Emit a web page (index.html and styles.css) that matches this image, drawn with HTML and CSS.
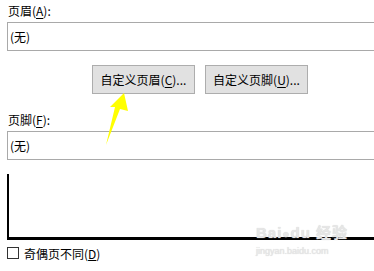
FILE: index.html
```html
<!DOCTYPE html>
<html lang="zh-CN">
<head>
  <meta charset="UTF-8" />
  <title>页面设置</title>
  <link rel="stylesheet" href="styles.css">
</head>
<body>
  <div class="dialog">
    <div class="label">页眉(<u>A</u>):</div>
    <div class="field">(无)</div>

    <div class="btn-row">
      <button class="btn">自定义页眉(<u>C</u>)...</button>
      <button class="btn">自定义页脚(<u>U</u>)...</button>
    </div>

    <div class="label label-footer">页脚(<u>F</u>):</div>
    <div class="field">(无)</div>

    <div class="preview"></div>

    <label class="check-row">
      <span class="check"></span>
      <span>奇偶页不同(<u>D</u>)</span>
    </label>
  </div>

  <svg class="arrow" width="40" height="60" viewBox="0 0 40 60">
    <polygon points="28,0 32,18 24,16 10,52 19,14 14,14" fill="#ffff00"/>
  </svg>

  <div class="watermark">
    <div class="wm-logo">Bai<span class="paw">●</span>du 经验</div>
    <div class="wm-url">jingyan.baidu.com</div>
  </div>
</body>
</html>
```

FILE: styles.css
```css
body {
  margin: 0;
  background: #fff;
  color: #000;
  font-family: "Noto Sans CJK SC", "Liberation Sans", sans-serif;
  font-size: 12px;
  overflow: hidden;
  position: relative;
  width: 374px;
  height: 271px;
}
.dialog {
  padding: 3px 0 0 7px;
  width: 420px;
}
.label {
  height: 16px;
  line-height: 16px;
  padding-left: 1px;
}
.label u {
  text-decoration-thickness: 1px;
  text-underline-offset: 2px;
}
.field {
  margin-top: 3px;
  height: 27px;
  line-height: 27px;
  border: 1px solid #a9a9a9;
  padding-left: 2px;
}
.btn-row {
  display: flex;
  gap: 10px;
  margin: 14px 0 0 85px;
}
.btn {
  width: 103px;
  height: 29px;
  background: #e1e1e1;
  border: 1px solid #adadad;
  font-family: inherit;
  font-size: 12px;
  color: #000;
  padding: 0;
}
.btn u {
  text-underline-offset: 2px;
}
.label-footer {
  margin-top: 18px;
}
.preview {
  margin-top: 14px;
  height: 63px;
  border-left: 2px solid #000;
  border-bottom: 3px solid #000;
}
.check-row {
  display: flex;
  align-items: center;
  gap: 5px;
  margin-top: 5px;
  height: 16px;
}
.check {
  width: 10px;
  height: 10px;
  border: 1px solid #333;
  background: #fff;
}
.arrow {
  position: absolute;
  left: 96px;
  top: 93px;
}
.watermark {
  position: absolute;
  left: 256px;
  top: 224px;
  color: #e6e6e6;
  font-family: "Liberation Sans", "Noto Sans CJK SC", sans-serif;
  text-shadow: 0 0 1px #cfcfcf;
}
.wm-logo {
  font-size: 15px;
  font-weight: bold;
  line-height: 18px;
  letter-spacing: 1px;
}
.paw {
  font-size: 12px;
}
.wm-url {
  font-size: 9px;
  margin-top: 3px;
}
```
